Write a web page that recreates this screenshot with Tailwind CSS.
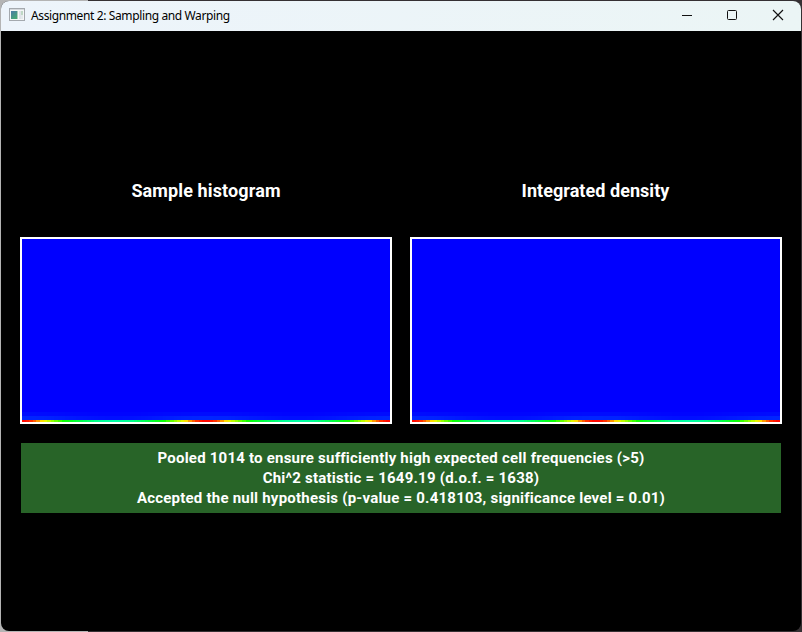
<!DOCTYPE html>
<html lang="en">
<head>
<meta charset="utf-8">
<title>Assignment 2: Sampling and Warping</title>
<script src="https://cdn.jsdelivr.net/npm/@tailwindcss/browser@4"></script>
</head>
<body class="w-[802px] h-[632px] overflow-hidden p-px bg-[linear-gradient(90deg,#b4b4b4_88px,#353033_88px)]">
<div class="w-[800px] h-[630px] rounded-lg overflow-hidden bg-black flex flex-col">
  <header class="h-[30px] shrink-0 bg-linear-to-r from-[#edf4fb] to-[#ebf5f5] flex items-center pl-2 text-black">
    <svg class="w-4 h-4 shrink-0 -mt-0.5" viewBox="0 0 16 16" shape-rendering="crispEdges">
      <defs><linearGradient id="appGreen" x2="0.6" y2="1"><stop stop-color="#4b79a8"/><stop offset="1" stop-color="#46a775"/></linearGradient></defs>
      <path fill="#a4a9ae" d="M0 1h16v13H0z"/><path fill="#f5f7f7" d="M1 3h14v10H1z"/><path fill="#d5d9dd" d="M1 2h14v1H1z"/>
      <path fill="url(#appGreen)" d="M2 4h6v8H2z"/><path fill="#a9cabb" d="M8 4h1v8H8z"/><path fill="#dfe4e8" d="M10 4h2v8h-2z"/><path fill="#bfd8c6" d="M12 4h2v4h-2z"/><path fill="#e5eaed" d="M12 8h2v4h-2z"/>
    </svg>
    <div class="ml-[6px] font-['Noto_Sans',sans-serif] text-[12px] leading-4 tracking-[-0.38px] whitespace-nowrap grow">Assignment 2: Sampling and Warping</div>
    <svg class="w-[138px] h-[30px] shrink-0" viewBox="0 0 138 30" fill="none" stroke="#111" stroke-width="1">
      <path d="M19 14.5h10"/><rect x="64.5" y="9.5" width="9" height="9" rx="1"/><path stroke-width="1.15" d="M110 9l10 10M120 9l-10 10"/>
    </svg>
  </header>
  <main class="grow flex flex-col pt-[146px] pl-[19px] pr-[19px] text-white font-['Roboto',sans-serif] font-bold">
    <div class="flex gap-[18px]">
      <section class="w-[372px]">
        <h2 class="h-[60px] pt-0.5 text-[18px] leading-[24px] tracking-[0.12px] font-bold text-center whitespace-nowrap">Sample histogram</h2>
        <svg class="plot block w-[372px] h-[187px] border-2 border-white bg-[#0000ff]" viewBox="0 0 368 183" shape-rendering="crispEdges"></svg>
      </section>
      <section class="w-[372px]">
        <h2 class="h-[60px] pt-0.5 pr-px text-[18px] leading-[24px] tracking-[0.05px] font-bold text-center whitespace-nowrap">Integrated density</h2>
        <svg class="plot block w-[372px] h-[187px] border-2 border-white bg-[#0000ff]" viewBox="0 0 368 183" shape-rendering="crispEdges"></svg>
      </section>
    </div>
    <div class="mt-[19px] mx-px w-[760px] h-[70px] bg-[#286428] pt-[5px] text-center text-[15px] leading-5 tracking-[0.22px] whitespace-nowrap">
      <p>Pooled 1014 to ensure sufficiently high expected cell frequencies (&gt;5)</p>
      <p>Chi^2 statistic = 1649.19 (d.o.f. = 1638)</p>
      <p>Accepted the null hypothesis (p-value = 0.418103, significance level = 0.01)</p>
    </div>
  </main>
</div>
<script>
  // Density along the lowest row: [offset within one period, r, g, b]
  const stops = [[0,255,0,0],[8,255,35,0],[14,255,110,0],[21,255,245,0],[29,170,255,0],[42,10,255,0],[58,0,255,70],[76,0,255,145],[92,0,255,165]];
  const colorAt = x => {
    const d = Math.min(x % 184, 184 - x % 184);
    let i = 0;
    while (i < stops.length - 2 && stops[i + 1][0] < d) i++;
    const a = stops[i], b = stops[i + 1], t = (d - a[0]) / (b[0] - a[0]);
    return [1, 2, 3].map(k => Math.round(a[k] + (b[k] - a[k]) * t));
  };
  document.querySelectorAll('.plot').forEach(svg => {
    const add = (x, y, w, h, fill) => {
      const r = document.createElementNS('http://www.w3.org/2000/svg', 'rect');
      Object.entries({x, y, width: w, height: h, fill}).forEach(([k, v]) => r.setAttribute(k, v));
      svg.append(r);
    };
    const n = 102, w = 368 / n;
    for (let i = 0; i < n; i++) {
      const x = i * w, c = (1 + Math.cos((x + w / 2) / 184 * 2 * Math.PI)) / 2;
      add(x, 173, w, 4, `rgb(0,${Math.round(4 + 8 * c)},255)`);
      add(x, 177, w, 4, `rgb(0,${Math.round(15 + 22 * c)},255)`);
      add(x, 181, w, 2, `rgb(${colorAt(x + w / 2)})`);
    }
  });
</script>
</body>
</html>
